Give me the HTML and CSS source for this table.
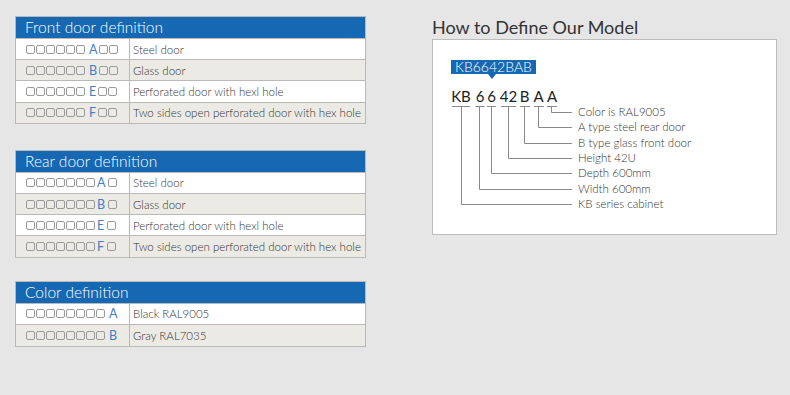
FILE: index.html
```html
<!DOCTYPE html>
<html lang="en">
<head>
    <meta charset="UTF-8">
    <title>Model Definition</title>
    <link rel="stylesheet" href="styles.css">
</head>
<body>
    <div class="page">
        <div class="tables">
            <table class="def-table front">
                <colgroup><col class="col-code"><col></colgroup>
                <thead>
                    <tr><th colspan="2">Front door definition</th></tr>
                </thead>
                <tbody>
                    <tr>
                        <td class="code"><span class="sq"></span><span class="sq"></span><span class="sq"></span><span class="sq"></span><span class="sq"></span><span class="sq"></span><b>A</b><span class="sq"></span><span class="sq"></span></td>
                        <td>Steel door</td>
                    </tr>
                    <tr>
                        <td class="code"><span class="sq"></span><span class="sq"></span><span class="sq"></span><span class="sq"></span><span class="sq"></span><span class="sq"></span><b>B</b><span class="sq"></span><span class="sq"></span></td>
                        <td>Glass door</td>
                    </tr>
                    <tr>
                        <td class="code"><span class="sq"></span><span class="sq"></span><span class="sq"></span><span class="sq"></span><span class="sq"></span><span class="sq"></span><b>E</b><span class="sq"></span><span class="sq"></span></td>
                        <td>Perforated door with hexl hole</td>
                    </tr>
                    <tr>
                        <td class="code"><span class="sq"></span><span class="sq"></span><span class="sq"></span><span class="sq"></span><span class="sq"></span><span class="sq"></span><b>F</b><span class="sq"></span><span class="sq"></span></td>
                        <td>Two sides open perforated door with hex hole</td>
                    </tr>
                </tbody>
            </table>

            <table class="def-table rear">
                <colgroup><col class="col-code"><col></colgroup>
                <thead>
                    <tr><th colspan="2">Rear door definition</th></tr>
                </thead>
                <tbody>
                    <tr>
                        <td class="code"><span class="sq"></span><span class="sq"></span><span class="sq"></span><span class="sq"></span><span class="sq"></span><span class="sq"></span><span class="sq"></span><b class="tight">A</b><span class="sq"></span></td>
                        <td>Steel door</td>
                    </tr>
                    <tr>
                        <td class="code"><span class="sq"></span><span class="sq"></span><span class="sq"></span><span class="sq"></span><span class="sq"></span><span class="sq"></span><span class="sq"></span><b class="tight">B</b><span class="sq"></span></td>
                        <td>Glass door</td>
                    </tr>
                    <tr>
                        <td class="code"><span class="sq"></span><span class="sq"></span><span class="sq"></span><span class="sq"></span><span class="sq"></span><span class="sq"></span><span class="sq"></span><b class="tight">E</b><span class="sq"></span></td>
                        <td>Perforated door with hexl hole</td>
                    </tr>
                    <tr>
                        <td class="code"><span class="sq"></span><span class="sq"></span><span class="sq"></span><span class="sq"></span><span class="sq"></span><span class="sq"></span><span class="sq"></span><b class="tight">F</b><span class="sq"></span></td>
                        <td>Two sides open perforated door with hex hole</td>
                    </tr>
                </tbody>
            </table>

            <table class="def-table color">
                <colgroup><col class="col-code"><col></colgroup>
                <thead>
                    <tr><th colspan="2">Color definition</th></tr>
                </thead>
                <tbody>
                    <tr>
                        <td class="code"><span class="sq"></span><span class="sq"></span><span class="sq"></span><span class="sq"></span><span class="sq"></span><span class="sq"></span><span class="sq"></span><span class="sq"></span><b>A</b></td>
                        <td>Black RAL9005</td>
                    </tr>
                    <tr>
                        <td class="code"><span class="sq"></span><span class="sq"></span><span class="sq"></span><span class="sq"></span><span class="sq"></span><span class="sq"></span><span class="sq"></span><span class="sq"></span><b>B</b></td>
                        <td>Gray RAL7035</td>
                    </tr>
                </tbody>
            </table>
        </div>

        <div class="model">
            <h2>How to Define Our Model</h2>
            <div class="model-box">
                <div class="tag">KB6642BAB</div>
                <div class="diagram">
                    <svg class="lines" width="127" height="122" viewBox="0 0 127 122">
                        <g class="chars" text-anchor="middle">
                            <text x="10" y="14">KB</text>
                            <text x="29" y="14">6</text>
                            <text x="40.5" y="14">6</text>
                            <text x="57.5" y="14">42</text>
                            <text x="73.5" y="14">B</text>
                            <text x="87.5" y="14">A</text>
                            <text x="101" y="14">A</text>
                        </g>
                        <g class="leader" fill="none">
                            <!-- underlines -->
                            <path d="M1 18.5H19M24.5 18.5H33.5M36 18.5H45M50 18.5H65M69 18.5H79M83 18.5H93M96 18.5H106"/>
                            <!-- stems -->
                            <path d="M100.5 18.5V24.5H121"/>
                            <path d="M87.5 18.5V39.5H121"/>
                            <path d="M73.5 18.5V55.5H121"/>
                            <path d="M57.5 18.5V70.5H121"/>
                            <path d="M40.5 18.5V85.5H121"/>
                            <path d="M28.5 18.5V101.5H121"/>
                            <path d="M10.5 18.5V116.5H121"/>
                        </g>
                    </svg>
                    <ul class="labels">
                        <li>Color is RAL9005</li>
                        <li>A type steel rear door</li>
                        <li>B type glass front door</li>
                        <li>Height 42U</li>
                        <li>Depth 600mm</li>
                        <li>Width 600mm</li>
                        <li>KB series cabinet</li>
                    </ul>
                </div>
            </div>
        </div>
    </div>
</body>
</html>
```

FILE: styles.css
```css
* {
    margin: 0;
    padding: 0;
    box-sizing: border-box;
}

body {
    background: #e6e6e6;
    font-family: Lato, "Open Sans", sans-serif;
    color: #444;
    width: 790px;
    height: 395px;
    overflow: hidden;
}

.page {
    display: flex;
    padding: 16px 0 0 15px;
}

/* left column: definition tables */
.tables {
    width: 351px;
    display: flex;
    flex-direction: column;
}

.def-table {
    width: 351px;
    border-collapse: collapse;
    border: 1px solid #b9b9b9;
    table-layout: fixed;
}

.def-table.front {
    margin-bottom: 26px;
}

.def-table.rear {
    margin-bottom: 23px;
}

.col-code {
    width: 114px;
}

.def-table th {
    background: #1668b3;
    color: #fff;
    font-weight: 300;
    font-size: 15.5px;
    text-align: left;
    height: 22px;
    padding: 0 0 1px 9px;
    border: 1px solid #b9b9b9;
}

.def-table td {
    height: 21.2px;
    font-size: 11.5px;
    font-weight: 300;
    padding: 0 0 0 3px;
    border: 1px solid #b9b9b9;
    white-space: nowrap;
    background: #fff;
    color: #333;
}

.def-table.color td {
    height: 21.7px;
}

.def-table tbody tr:nth-child(even) td {
    background: #ebeae5;
}

.def-table td.code {
    padding-left: 10px;
    font-size: 0;
}

.sq {
    display: inline-block;
    width: 9px;
    height: 9px;
    border: 1px solid #9a9a9a;
    border-radius: 2px;
    margin-right: 1px;
    vertical-align: middle;
}

.code b {
    display: inline-block;
    font-weight: 400;
    font-size: 12.5px;
    color: #3f7fc9;
    vertical-align: middle;
    margin: 0 2px 0 3px;
}

.code b.tight {
    margin: 0 3px 0 1px;
}

/* right column: model code */
.model {
    margin-left: 66px;
    width: 345px;
}

.model h2 {
    font-weight: 400;
    font-size: 18px;
    color: #333;
    height: 23px;
}

.model-box {
    background: #fff;
    border: 1px solid #bdbdbd;
    height: 196px;
    padding: 20px 0 0 18px;
}

.tag {
    position: relative;
    width: fit-content;
    background: #1668b3;
    color: #fff;
    font-size: 14px;
    font-weight: 300;
    line-height: 14px;
    height: 14px;
    padding: 0 4px;
}

.tag::after {
    content: "";
    position: absolute;
    left: 37px;
    top: 14px;
    border-left: 4px solid transparent;
    border-right: 4px solid transparent;
    border-top: 5px solid #1668b3;
}

.diagram {
    display: flex;
    margin-top: 14px;
}

.lines .chars {
    font-family: Lato, sans-serif;
    font-size: 15px;
    fill: #222;
}

.lines .leader {
    stroke: #8a8a8a;
    stroke-width: 1;
}

.labels {
    list-style: none;
    margin-top: 16px;
    font-size: 11.5px;
    font-weight: 300;
    line-height: 15.33px;
    color: #333;
    white-space: nowrap;
}
```
